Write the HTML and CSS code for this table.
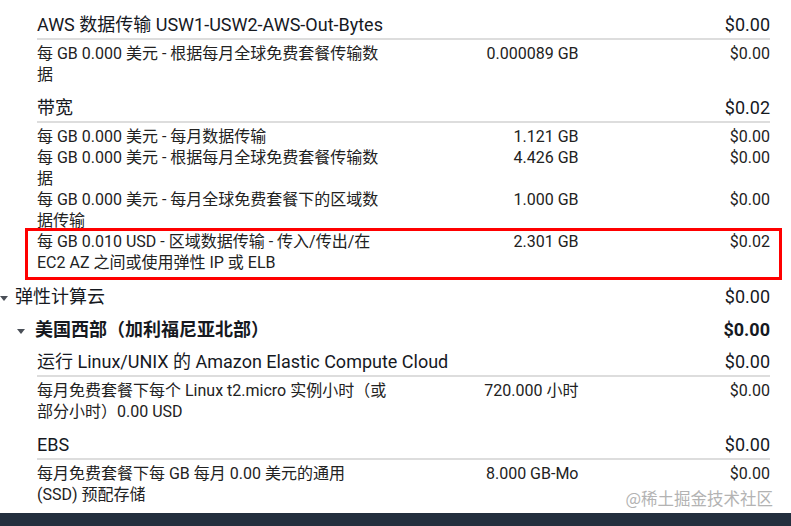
FILE: index.html
```html
<!DOCTYPE html>
<html lang="zh-CN">

<head>
    <meta charset="UTF-8">
    <meta name="viewport" content="width=device-width, initial-scale=1.0">
    <title>账单详情</title>
    <link rel="stylesheet" href="styles.css">
</head>

<body>

    <div class="bill">

        <div class="service-group">
            <div class="service-head">
                <span>AWS 数据传输 USW1-USW2-AWS-Out-Bytes</span>
                <span>$0.00</span>
            </div>
            <div class="line-items">
                <div class="line-item">
                    <span class="desc">每 GB 0.000 美元 - 根据每月全球免费套餐传输数<br>据</span>
                    <span class="qty">0.000089 GB</span>
                    <span class="cost">$0.00</span>
                </div>
            </div>
        </div>

        <div class="service-group">
            <div class="service-head">
                <span>带宽</span>
                <span>$0.02</span>
            </div>
            <div class="line-items">
                <div class="line-item">
                    <span class="desc">每 GB 0.000 美元 - 每月数据传输</span>
                    <span class="qty">1.121 GB</span>
                    <span class="cost">$0.00</span>
                </div>
                <div class="line-item">
                    <span class="desc">每 GB 0.000 美元 - 根据每月全球免费套餐传输数<br>据</span>
                    <span class="qty">4.426 GB</span>
                    <span class="cost">$0.00</span>
                </div>
                <div class="line-item">
                    <span class="desc">每 GB 0.000 美元 - 每月全球免费套餐下的区域数<br>据传输</span>
                    <span class="qty">1.000 GB</span>
                    <span class="cost">$0.00</span>
                </div>
                <div class="line-item marked">
                    <span class="desc">每 GB 0.010 USD - 区域数据传输 - 传入/传出/在<br>EC2 AZ 之间或使用弹性 IP 或 ELB</span>
                    <span class="qty">2.301 GB</span>
                    <span class="cost">$0.02</span>
                </div>
            </div>
        </div>

        <div class="product-head">
            <span class="toggle"><i class="caret"></i>弹性计算云</span>
            <span>$0.00</span>
        </div>

        <div class="region-head">
            <span class="toggle"><i class="caret"></i>美国西部（加利福尼亚北部）</span>
            <span>$0.00</span>
        </div>

        <div class="service-group first-in-region">
            <div class="service-head">
                <span>运行 Linux/UNIX 的 Amazon Elastic Compute Cloud</span>
                <span>$0.00</span>
            </div>
            <div class="line-items">
                <div class="line-item">
                    <span class="desc">每月免费套餐下每个 Linux t2.micro 实例小时（或<br>部分小时）0.00 USD</span>
                    <span class="qty">720.000 小时</span>
                    <span class="cost">$0.00</span>
                </div>
            </div>
        </div>

        <div class="service-group">
            <div class="service-head">
                <span>EBS</span>
                <span>$0.00</span>
            </div>
            <div class="line-items">
                <div class="line-item">
                    <span class="desc">每月免费套餐下每 GB 每月 0.00 美元的通用<br>(SSD) 预配存储</span>
                    <span class="qty">8.000 GB-Mo</span>
                    <span class="cost">$0.00</span>
                </div>
            </div>
        </div>

    </div>

    <div class="footer-bar"></div>

    <div class="watermark">@稀土掘金技术社区</div>

</body>

</html>
```

FILE: styles.css
```css
html,
body {
    margin: 0;
    padding: 0;
    background: #fff;
}

body {
    width: 791px;
    height: 526px;
    overflow: hidden;
    position: relative;
    font-family: Roboto, "Noto Sans CJK SC", sans-serif;
    color: #16191f;
}

.bill {
    padding: 2px 21px 0 0;
}

.service-group {
    margin-top: 11px;
    padding-left: 37px;
}

.service-group.first-in-region {
    margin-top: 8px;
}

.service-head {
    display: flex;
    justify-content: space-between;
    font-size: 18px;
    line-height: 24px;
    padding-bottom: 1px;
    border-bottom: 2px solid #dddddd;
}

.line-items {
    padding-top: 3px;
}

.line-item {
    display: grid;
    grid-template-columns: 350px 1fr 1fr;
    font-size: 16px;
    line-height: 21px;
    color: #222;
}

.line-item .desc {
    white-space: nowrap;
}

.line-item .qty,
.line-item .cost {
    text-align: right;
}

.line-item.marked {
    position: relative;
}

/* red annotation frame drawn over the row */
.line-item.marked::after {
    content: "";
    position: absolute;
    top: -3px;
    bottom: -7px;
    left: -12px;
    right: -12px;
    border: 3px solid #ff0000;
}

.product-head,
.region-head {
    display: flex;
    justify-content: space-between;
    font-size: 18px;
    line-height: 24px;
}

.product-head {
    margin-top: 12px;
}

.region-head {
    margin-top: 9px;
    padding-left: 17px;
    font-weight: bold;
}

.toggle {
    display: flex;
    align-items: center;
}

.caret {
    display: inline-block;
    width: 0;
    height: 0;
    border-left: 4px solid transparent;
    border-right: 4px solid transparent;
    border-top: 5px solid #4a4f57;
    margin-top: 2px;
    margin-right: 7px;
}

.region-head .caret {
    margin-right: 10px;
}

.footer-bar {
    position: absolute;
    left: 0;
    right: 0;
    top: 513px;
    height: 13px;
    background: #232f3e;
}

.watermark {
    position: absolute;
    right: 18px;
    top: 487px;
    font-size: 16.5px;
    line-height: 22px;
    color: #b3b3b3;
    font-family: "Noto Sans CJK SC", sans-serif;
}
```
